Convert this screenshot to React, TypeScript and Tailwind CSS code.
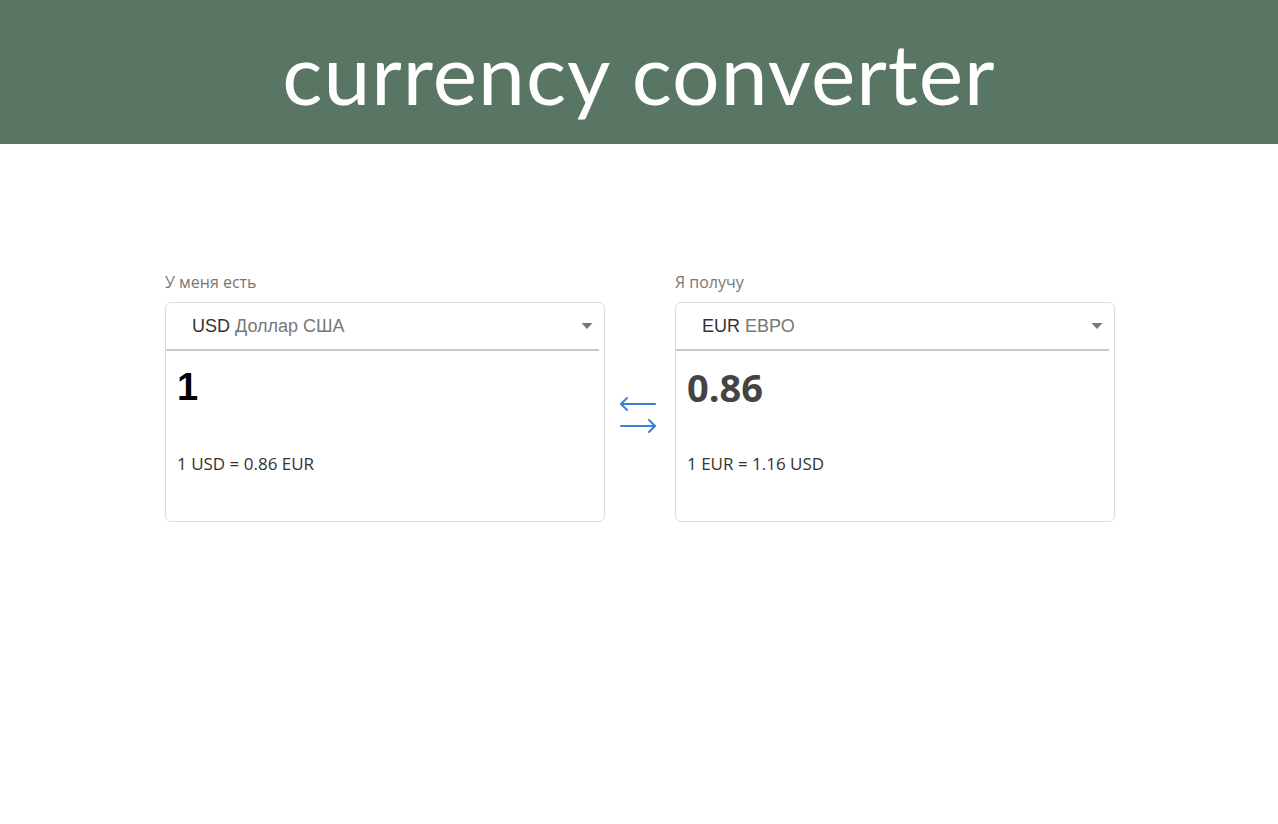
import { useState } from "react";

function Arrows() {
  return (
    <svg width="40" height="40" viewBox="0 0 40 40" fill="none" stroke="#3a7fd8" strokeWidth="2" strokeLinecap="round" strokeLinejoin="round">
      <path d="M3 10 H37" />
      <path d="M9 4 L3 10 L9 16" />
      <path d="M3 32 H37" />
      <path d="M31 26 L37 32 L31 38" />
    </svg>
  );
}

function CurrencyBox({
  label,
  code,
  name,
  value,
  rate,
  valueClass,
}: {
  label: string;
  code: string;
  name: string;
  value: string;
  rate: string;
  valueClass: string;
}) {
  return (
    <div className="w-[440px] flex flex-col">
      <div className="text-[16px] text-[#777] mb-[8px] leading-[24px] pt-[1px] font-['Open_Sans',sans-serif]">{label}</div>
      <div className="h-[220px] border border-[#d9d9d9] rounded-[6px] flex flex-col">
        <div className="h-[48px] mr-[5px] border-b-2 border-[#c8c8c8] flex items-center pl-[26px] pr-[6px] font-['Liberation_Sans',Arial,sans-serif] text-[18px]">
          <span className="text-[#333]">{code}</span>
          <span className="text-[#777] ml-[5px]">{name}</span>
          <svg className="ml-auto" width="12" height="8" viewBox="0 0 12 8">
            <path d="M0.5 1 L11.5 1 L6 7 Z" fill="#777" />
          </svg>
        </div>
        <div className={"pl-[11px] pt-[12px] h-[62px] leading-[48px] " + valueClass}>{value}</div>
        <div className="pl-[11px] mt-[38px] text-[17px] text-[#333] font-['Open_Sans',sans-serif]">{rate}</div>
      </div>
    </div>
  );
}

export default function App() {
  const [amount] = useState("1");
  return (
    <div className="min-h-screen bg-white">
      <header className="h-[144px] bg-[#597664] flex items-center justify-center">
        <h1 className="text-white text-[84px] font-['Lato',sans-serif] tracking-[1px] leading-none pt-[2px]">
          currency converter
        </h1>
      </header>
      <main className="flex items-start pl-[165px] pt-[125px]">
        <CurrencyBox
          label="У меня есть"
          code="USD"
          name="Доллар США"
          value={amount}
          rate="1 USD = 0.86 EUR"
          valueClass="text-[38px] font-bold text-black font-['Liberation_Sans',Arial,sans-serif]"
        />
        <div className="w-[40px] ml-[13px] mr-[17px] pt-[125px]">
          <Arrows />
        </div>
        <CurrencyBox
          label="Я получу"
          code="EUR"
          name="ЕВРО"
          value="0.86"
          rate="1 EUR = 1.16 USD"
          valueClass="text-[38px] font-bold text-[#444] font-['Open_Sans',sans-serif]"
        />
      </main>
    </div>
  );
}
